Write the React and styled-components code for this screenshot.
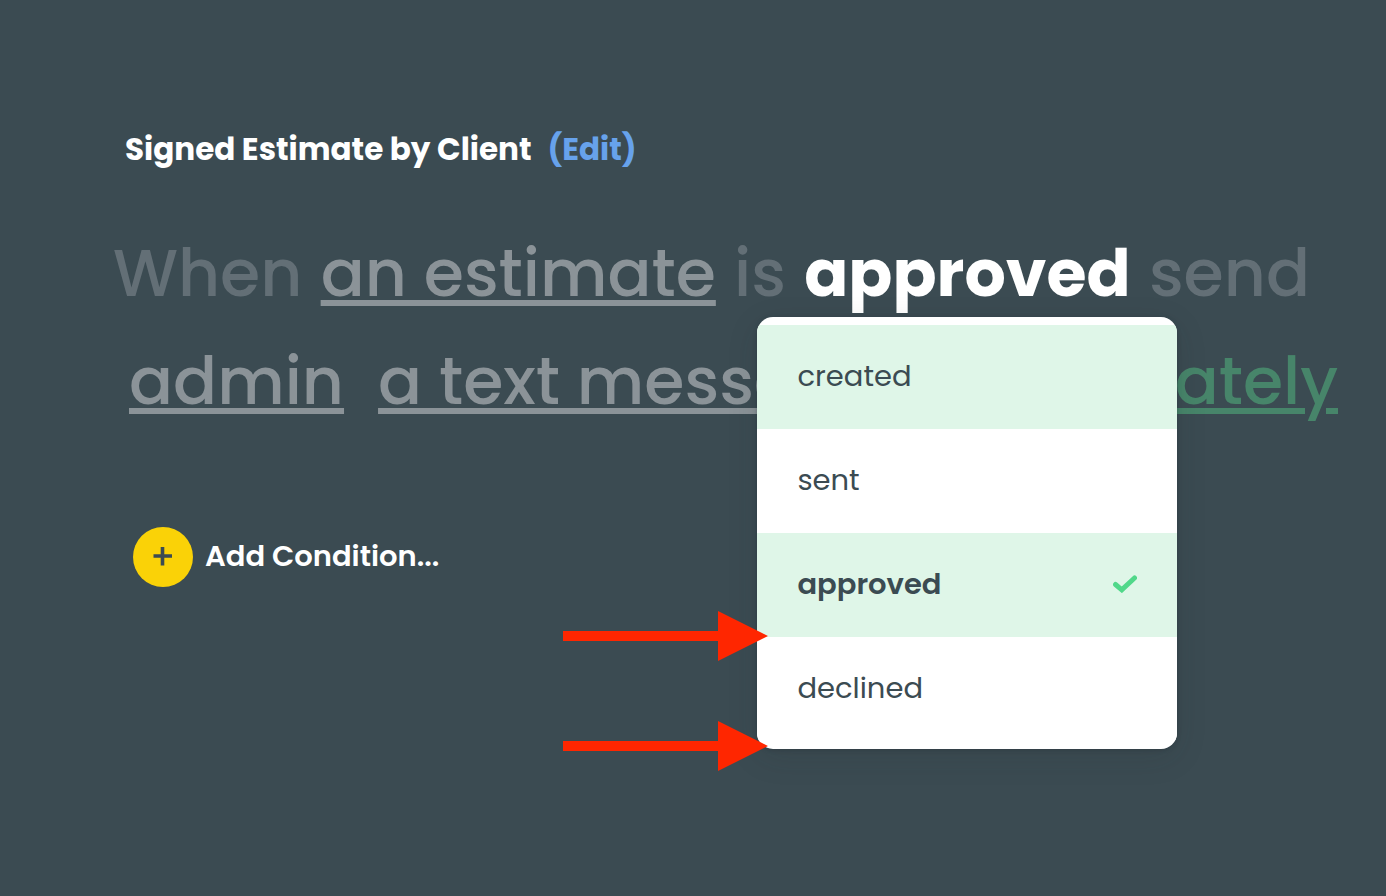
import React, { useState } from "react";
import styled, { createGlobalStyle } from "styled-components";

const GlobalStyle = createGlobalStyle`
  * { box-sizing: border-box; }
  body {
    margin: 0;
    background: #3b4b52;
    color: #ffffff;
    font-family: Poppins, Inter, "Open Sans", sans-serif;
  }
  button { font: inherit; color: inherit; border: 0; padding: 0; background: none; cursor: pointer; }
`;

const Page = styled.main`
  min-height: 100vh;
  padding: 125px 48px 48px 113px;
`;

const Header = styled.header`
  display: flex;
  gap: 16px;
  padding-left: 12px;
  font-size: 31px;
  font-weight: 700;
  line-height: 48px;
`;

const Title = styled.h1`
  margin: 0;
  font: inherit;
`;

const EditLink = styled.a`
  color: #67a2eb;
  text-decoration: none;
`;

const Sentence = styled.section`
  margin-top: 47px;
  font-size: 65px;
  font-weight: 500;
  line-height: 108px;
  white-space: nowrap;
`;

const FirstLine = styled.div`
  display: flex;
  justify-content: space-between;
  padding-right: 28px;
`;

const SecondLine = styled.div`
  display: flex;
  gap: 34px;
  padding-left: 16px;
`;

const Word = styled.span`
  color: #636f76;
`;

const Choice = styled.button`
  color: ${(p) => (p.$timing ? "#47856a" : "#8b9398")};
  margin-left: ${(p) => (p.$timing ? "auto" : "0")};
  text-decoration: underline;
  text-decoration-thickness: 6px;
  text-underline-offset: 4px;
`;

const Picker = styled.div`
  position: relative;
`;

const Current = styled.button`
  font-weight: 700;
`;

const Dropdown = styled.div`
  position: absolute;
  z-index: 2;
  top: 97px;
  left: 50%;
  width: 420px;
  transform: translateX(-50%);
  border-radius: 16px;
  color: #3b4b52;
  box-shadow: 0 1px 4px rgba(30, 35, 45, 0.3), 0 8px 32px rgba(30, 40, 45, 0.12);
`;

const Menu = styled.div`
  overflow: hidden;
  padding: 8px 0;
  border-radius: 16px;
  background: #ffffff;
`;

const Option = styled.button`
  display: flex;
  align-items: center;
  justify-content: space-between;
  width: 100%;
  height: 104px;
  padding: 0 40px 2px;
  background: ${(p) => (p.$tinted ? "#dff6e8" : "#ffffff")};
  font-size: 29px;
  line-height: 44px;
  font-weight: ${(p) => (p.$selected ? 600 : 400)};
`;

const Arrow = styled.svg`
  position: absolute;
  right: calc(100% - 11px);
  bottom: ${(p) => p.$bottom}px;
  display: block;
`;

const AddCondition = styled.button`
  display: flex;
  align-items: center;
  gap: 12px;
  margin: 91px 0 0 20px;
  font-size: 29px;
  font-weight: 600;
  line-height: 44px;
`;

const PlusCircle = styled.span`
  display: grid;
  place-items: center;
  width: 60px;
  height: 60px;
  border-radius: 50%;
  background: #fad207;
`;

const AddLabel = styled.span`
  padding-bottom: 2px;
`;

const options = ["created", "sent", "approved", "declined"];

function Pointer({ bottom }) {
  return (
    <Arrow $bottom={bottom} width="205" height="50" viewBox="0 0 205 50" fill="#ff2600" aria-hidden="true">
      <path d="M0 20H155V0L205 25L155 50V30H0Z" />
    </Arrow>
  );
}

export default function App() {
  const [status, setStatus] = useState("approved");

  return (
    <Page>
      <GlobalStyle />
      <Header>
        <Title>Signed Estimate by Client</Title>
        <EditLink href="#edit">(Edit)</EditLink>
      </Header>
      <Sentence>
        <FirstLine>
          <Word>When</Word>
          <Choice type="button">an estimate</Choice>
          <Word>is</Word>
          <Picker>
            <Current type="button" aria-haspopup="listbox">{status}</Current>
            <Dropdown>
              <Menu role="listbox" aria-label="Estimate status">
                {options.map((name) => (
                  <Option
                    key={name}
                    type="button"
                    role="option"
                    aria-selected={name === status}
                    $selected={name === status}
                    $tinted={name === status || name === "created"}
                    onClick={() => setStatus(name)}
                  >
                    {name}
                    {name === status && (
                      <svg width="24" height="18" viewBox="0 0 24 18" fill="none" aria-hidden="true">
                        <path d="M2.5 9.5L8.8 14.8L21.5 3" stroke="#51d88a" strokeWidth="5" strokeLinecap="round" />
                      </svg>
                    )}
                  </Option>
                ))}
              </Menu>
              <Pointer bottom={88} />
              <Pointer bottom={-22} />
            </Dropdown>
          </Picker>
          <Word>send</Word>
        </FirstLine>
        <SecondLine>
          <Choice type="button">admin</Choice>
          <Choice type="button">a text message</Choice>
          <Choice type="button" $timing>immediately</Choice>
        </SecondLine>
      </Sentence>
      <AddCondition type="button">
        <PlusCircle>
          <svg width="20" height="22" viewBox="0 0 20 22" fill="none" aria-hidden="true">
            <path d="M9.5 1V19.5M0.5 10H19" stroke="#3b4b52" strokeWidth="3.6" />
          </svg>
        </PlusCircle>
        <AddLabel>Add Condition...</AddLabel>
      </AddCondition>
    </Page>
  );
}
